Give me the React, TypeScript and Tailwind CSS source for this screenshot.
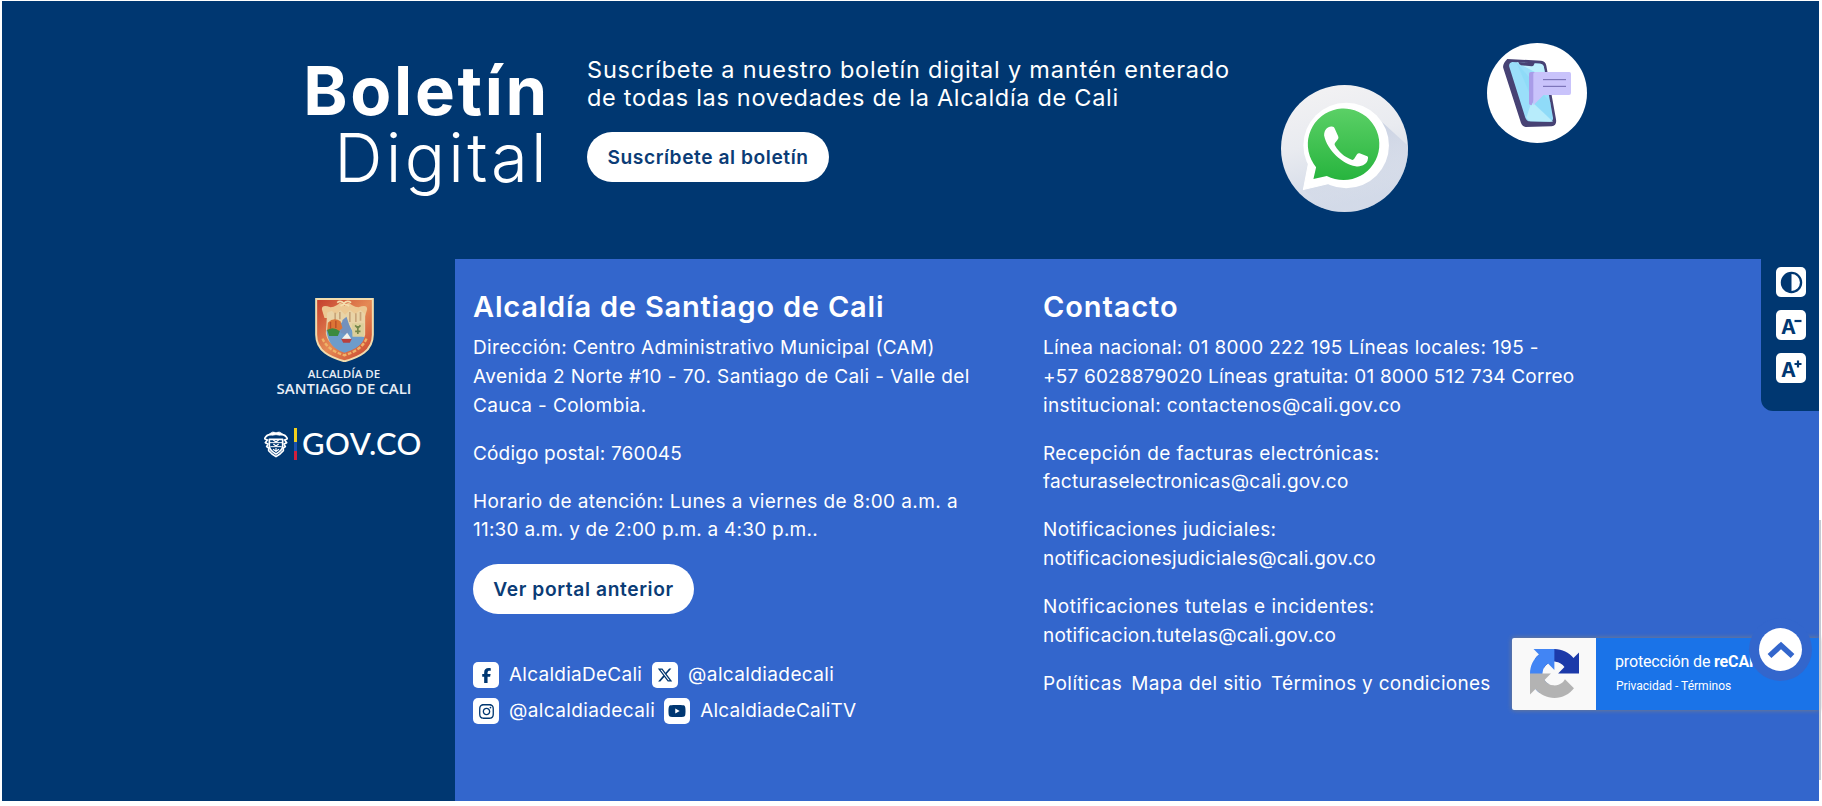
import type { ReactNode } from "react";
import { FaFacebookF, FaInstagram, FaXTwitter, FaYoutube } from "react-icons/fa6";

function CityCrest() {
  return (
    <svg viewBox="0 0 176 192" className="h-16 w-[59px]" aria-hidden="true">
      <defs>
        <linearGradient id="crestRed" x1="0" y1="0" x2="1" y2="1">
          <stop offset="0" stopColor="#c33d2c" />
          <stop offset="0.5" stopColor="#e58a55" />
          <stop offset="1" stopColor="#c8402b" />
        </linearGradient>
      </defs>
      <path d="M3 3H173V110C173 160 130 178 88 190C46 178 3 160 3 110Z" fill="url(#crestRed)" stroke="#f1dcae" strokeWidth="6" />
      <path d="M20 34Q20 18 46 28Q66 24 74 14Q82 14 88 24Q94 14 102 14Q110 24 130 28Q156 18 156 34L148 60H28Z" fill="#ecc892" />
      <path d="M66 14q10-8 20 2q10-10 22-2M76 24q12-10 26 0" fill="none" stroke="#f4dfae" strokeWidth="5" />
      <path d="M36 44L50 38L62 50L76 36L90 50L104 36L120 48L136 36L150 48V110Q146 134 88 162Q36 140 32 106Z" fill="#e9d3a6" />
      <path d="M34 96L66 84L92 64L112 100L148 118Q140 150 88 164Q38 150 34 96Z" fill="#6d9ccb" />
      <path d="M82 66L94 56L106 92L98 112L76 104Z" fill="#7391bd" />
      <path d="M60 44v30M74 42v22M104 42v30M122 46v26M136 42v26" stroke="#c8a57a" strokeWidth="5" />
      <path d="M38 74Q56 56 76 70L82 90L66 104L36 98Z" fill="#dc7435" />
      <path d="M36 96Q54 84 74 100L68 114H42Z" fill="#3b8a40" />
      <path d="M46 72v20M62 68v22" stroke="#b84d28" strokeWidth="4" />
      <path d="M110 76H146V116H112Z" fill="#dccf9a" />
      <path d="M120 82l8 8l8-8M128 84v24M120 100h16" stroke="#74874a" strokeWidth="5" fill="none" />
      <path d="M78 122H110L104 134H84Z" fill="#b9413c" />
      <path d="M80 122L96 104L108 122Z" fill="#f6f2ea" />
      <path d="M22 122Q36 156 88 172Q140 156 154 122" fill="none" stroke="#efb368" strokeWidth="7" strokeDasharray="11 5" />
    </svg>
  );
}

function NationalShield() {
  return (
    <svg viewBox="0 0 72 84" className="h-7 w-6" fill="none" stroke="#fff" strokeWidth="5" strokeLinejoin="round" aria-hidden="true">
      <path d="M16 12Q26 2 36 8Q46 2 56 12L48 16L36 14L24 16Z" fill="#fff" strokeWidth="2" />
      <path d="M22 14Q8 12 2 26L10 30L4 38L12 42L8 50L14 54L14 62L24 72L36 80L48 72L58 62V54L64 50L60 42L68 38L62 30L70 26Q64 12 50 14" />
      <path d="M16 28H56V50Q54 62 36 72Q18 62 16 50Z" />
      <path d="M18 38H54M19 50H53" strokeWidth="3" />
      <path d="M28 30l8 6l8-6M28 42l8 6l8-6M36 54v12M27 58l9 6l9-6" strokeWidth="3.5" />
    </svg>
  );
}

function WhatsAppBadge() {
  return (
    <svg viewBox="0 0 380 380" className="h-[127px] w-[127px]" aria-label="WhatsApp">
      <defs>
        <linearGradient id="waBg" x1="0" y1="0" x2="0.25" y2="1">
          <stop offset="0" stopColor="#f4f3f4" />
          <stop offset="0.5" stopColor="#e9ebf0" />
          <stop offset="1" stopColor="#d0d8e7" />
        </linearGradient>
        <linearGradient id="waGreen" x1="0" y1="0" x2="0" y2="1">
          <stop offset="0" stopColor="#5bd066" />
          <stop offset="1" stopColor="#27b43e" />
        </linearGradient>
        <linearGradient id="waShade" x1="0" y1="0" x2="0.3" y2="1">
          <stop offset="0" stopColor="#bcc6dc" />
          <stop offset="1" stopColor="#d9dfeb" stopOpacity="0.3" />
        </linearGradient>
        <clipPath id="waClip"><circle cx="190" cy="190" r="190" /></clipPath>
      </defs>
      <g clipPath="url(#waClip)">
        <rect width="380" height="380" fill="url(#waBg)" />
        <path d="M285 95L380 182V380H140L67 312Z" fill="url(#waShade)" />
        <circle cx="195" cy="181" r="128" fill="#fff" />
        <path d="M82 236L67 313L146 294Z" fill="#fff" stroke="#fff" strokeWidth="3" strokeLinejoin="round" />
        <path d="M105 246L97 281L137 272A107 107 0 1 0 105 246Z" fill="url(#waGreen)" />
        <path d="M129 151C129 134 139 123 152 124C157 124 159 126 161 131L171 153C173 158 171 161 168 165L162 173C160 176 160 179 162 182C174 202 189 215 210 223C214 225 217 224 219 221L227 208C230 204 233 203 237 205L258 213C261 215 261 218 260 221C259 237 240 246 223 243C185 237 138 195 129 151Z" fill="#fff" />
      </g>
    </svg>
  );
}

function PhoneBadge() {
  return (
    <svg viewBox="0 0 300 300" className="h-[100px] w-[100px]" aria-label="Mensajes">
      <circle cx="150" cy="150" r="150" fill="#fff" />
      <path d="M61 48L162 53Q176 54 178 68L207 229Q210 248 194 250L116 252Q106 251 102 240L49 76Q45 64 61 48Z" fill="#474274" />
      <path d="M76 57L160 62Q170 64 171 74L198 224Q199 235 189 236L129 235Q119 235 115 224L67 72Q64 60 76 57Z" fill="#9adffa" />
      <path d="M88 58L160 62Q170 64 171 74L176 104Z" fill="#bdeffd" />
      <path d="M88 58L190 178L197 235L140 180Z" fill="#83d7f7" opacity="0.45" />
      <path d="M134 176L198 236L129 235L118 224Z" fill="#b7ecfb" />
      <path d="M94 57L143 60L140 67Q139 70 134 70L102 67Q96 66 94 57Z" fill="#474274" />
      <path d="M126 93Q126 87 132 87H146V158L134 187Q126 187 126 181Z" fill="#a99ce8" />
      <path d="M139 92Q139 87 145 87H247Q252 87 252 93V150Q252 156 246 156H170L139 187Z" fill="#c9c3fb" />
      <path d="M168 110H237M168 130H237" stroke="#6e66ad" strokeWidth="3" />
    </svg>
  );
}

function RecaptchaLogo() {
  return (
    <svg viewBox="0 0 64 64" className="size-[49px]" aria-hidden="true">
      <path fill="#1c3aa9" d="M64 31.955l-.033-1.37V4.687l-7.16 7.16C50.948 4.674 42.033.093 32.05.093c-10.4 0-19.622 4.96-25.458 12.64l11.736 11.86a15.55 15.55 0 0 1 4.754-5.334c2.05-1.6 4.952-2.906 8.968-2.906.485 0 .86.057 1.135.163 4.976.393 9.288 3.14 11.828 7.124l-8.307 8.307L64 31.953" />
      <path fill="#4285f4" d="M31.862.094l-1.37.033H4.594l7.16 7.16C4.58 13.147 0 22.06 0 32.046c0 10.4 4.96 19.622 12.64 25.458L24.5 45.768a15.55 15.55 0 0 1-5.334-4.754c-1.6-2.05-2.906-4.952-2.906-8.968 0-.485.057-.86.163-1.135.393-4.976 3.14-9.288 7.124-11.828l8.307 8.307L31.86.095" />
      <path fill="#b3b3b3" d="M.001 32.045l.033 1.37v25.898l7.16-7.16c5.86 7.173 14.774 11.754 24.76 11.754 10.4 0 19.622-4.96 25.458-12.64l-11.736-11.86a15.55 15.55 0 0 1-4.754 5.334c-2.05 1.6-4.952 2.906-8.968 2.906-.485 0-.86-.057-1.135-.163-4.976-.393-9.288-3.14-11.828-7.124l8.307-8.307c-10.522.04-22.4.066-27.295-.005" />
    </svg>
  );
}

function Social({ icon, children }: { icon: ReactNode; children: ReactNode }) {
  return (
    <a className="flex items-center gap-2.5">
      <span className="flex size-[26px] items-center justify-center rounded-[5px] bg-white text-[#003771]">{icon}</span>
      {children}
    </a>
  );
}

function PillButton({ className, children }: { className: string; children: ReactNode }) {
  return (
    <button className={`flex h-[50px] items-center justify-center whitespace-nowrap rounded-[25px] bg-white text-[19.2px] font-semibold text-[#0b3c76] ${className}`}>
      {children}
    </button>
  );
}

function Newsletter() {
  return (
    <section className="flex h-[258px] items-start pt-14">
      <h2 className="w-[548px] text-right text-[67px] leading-[67px]">
        <span className="block font-bold tracking-[2.7px]">Boletín</span>
        <span className="block font-light tracking-[3.3px]">Digital</span>
      </h2>
      <div className="-mt-px ml-[37px] w-[694px]">
        <p className="whitespace-nowrap text-[23.5px] leading-7">
          <span className="block tracking-[0.8px]">Suscríbete a nuestro boletín digital y mantén enterado</span>
          <span className="block tracking-[0.7px]">de todas las novedades de la Alcaldía de Cali</span>
        </p>
        <PillButton className="mt-5 w-[242px] tracking-[0.56px]">Suscríbete al boletín</PillButton>
      </div>
      <div className="mt-7 w-[206px]"><WhatsAppBadge /></div>
      <div className="-mt-3.5"><PhoneBadge /></div>
    </section>
  );
}

function Logos() {
  return (
    <aside className="flex w-[453px] flex-col items-center pl-[231px] pt-[39px]">
      <div className="flex w-full flex-col items-center font-['Open_Sans'] font-semibold text-[#e8eef6]">
        <CityCrest />
        <span className="mt-[5px] text-[11.5px] leading-[14px]">ALCALDÍA DE</span>
        <span className="-mt-[2px] text-[15px] leading-[18px]">SANTIAGO DE CALI</span>
      </div>
      <div className="mt-[31px] flex h-8 w-full items-center pl-[31px]">
        <NationalShield />
        <span className="ml-[6px] flex h-8 w-[3px] flex-col">
          <span className="h-[14px] bg-[#f2cf1d]" />
          <span className="h-[9px] bg-[#1c52b0]" />
          <span className="h-[9px] bg-[#d01f3c]" />
        </span>
        <span className="-mt-0.5 ml-[5px] font-['Lato'] text-[31px] font-medium leading-8 tracking-[0.4px]">GOV.CO</span>
      </div>
    </aside>
  );
}

function CityInfo() {
  return (
    <div className="w-[570px]">
      <h3 className="text-[29px] font-semibold leading-[35px] tracking-[0.8px]">Alcaldía de Santiago de Cali</h3>
      <div className="mt-[10px] flex flex-col gap-[19.2px]">
        <p>
          <span className="block tracking-[0.34px]">Dirección: Centro Administrativo Municipal (CAM)</span>
          <span className="block tracking-[0.42px]">Avenida 2 Norte #10 - 70. Santiago de Cali - Valle del</span>
          <span className="block tracking-[0.37px]">Cauca - Colombia.</span>
        </p>
        <p className="tracking-[0.17px]">Código postal: 760045</p>
        <p>
          <span className="block tracking-[0.41px]">Horario de atención: Lunes a viernes de 8:00 a.m. a</span>
          <span className="block tracking-[0.23px]">11:30 a.m. y de 2:00 p.m. a 4:30 p.m..</span>
        </p>
      </div>
      <PillButton className="mt-[19px] w-[221px] tracking-[0.62px]">Ver portal anterior</PillButton>
      <div className="mt-12 flex flex-col gap-2.5 leading-[26px]">
        <div className="flex gap-[10px]">
          <Social icon={<FaFacebookF size={15} />}><span className="tracking-[0.26px]">AlcaldiaDeCali</span></Social>
          <Social icon={<FaXTwitter size={16} />}><span className="tracking-[0.38px]">@alcaldiadecali</span></Social>
        </div>
        <div className="flex gap-[9px]">
          <Social icon={<FaInstagram size={17} />}><span className="tracking-[0.38px]">@alcaldiadecali</span></Social>
          <Social icon={<FaYoutube size={18} />}><span className="tracking-[0.21px]">AlcaldiadeCaliTV</span></Social>
        </div>
      </div>
    </div>
  );
}

function Contact() {
  return (
    <div>
      <h3 className="text-[29px] font-semibold leading-[35px] tracking-[0.9px]">Contacto</h3>
      <div className="mt-[10px] flex flex-col gap-[19.2px]">
        <p>
          <span className="block tracking-[0.34px]">Línea nacional: 01 8000 222 195 Líneas locales: 195 -</span>
          <span className="block tracking-[0.18px]">+57 6028879020 Líneas gratuita: 01 8000 512 734 Correo</span>
          <span className="block tracking-[0.37px]">institucional: contactenos@cali.gov.co</span>
        </p>
        <p>
          <span className="block tracking-[0.42px]">Recepción de facturas electrónicas:</span>
          <span className="block tracking-[0.23px]">facturaselectronicas@cali.gov.co</span>
        </p>
        <p>
          <span className="block tracking-[0.37px]">Notificaciones judiciales:</span>
          <span className="block tracking-[0.22px]">notificacionesjudiciales@cali.gov.co</span>
        </p>
        <p>
          <span className="block tracking-[0.5px]">Notificaciones tutelas e incidentes:</span>
          <span className="block tracking-[0.25px]">notificacion.tutelas@cali.gov.co</span>
        </p>
        <nav className="flex gap-[9px]">
          <a className="tracking-[0.45px]">Políticas</a>
          <a className="tracking-[0.4px]">Mapa del sitio</a>
          <a className="tracking-[0.28px]">Términos y condiciones</a>
        </nav>
      </div>
    </div>
  );
}

function AccessibilityBar() {
  return (
    <div className="absolute right-[3px] top-[259px] flex h-[152px] w-[58px] flex-col gap-[13px] rounded-bl-xl bg-[#003771] pl-[15px] pt-2">
      <button className="flex size-[30px] items-center justify-center rounded-[5px] bg-white">
        <svg viewBox="0 0 24 24" className="size-[23px]" aria-label="Contraste">
          <circle cx="12" cy="12" r="10" fill="none" stroke="#003771" strokeWidth="2.4" />
          <path d="M12 2A10 10 0 0 0 12 22Z" fill="#003771" />
        </svg>
      </button>
      {["−", "+"].map((sign) => (
        <button key={sign} className="relative flex size-[30px] items-end rounded-[5px] bg-white pl-[5px] text-[#003771]">
          <span className="text-[20px] font-bold leading-[25px]">A</span>
          <svg viewBox="0 0 8 8" className="absolute right-[4px] top-[7px] size-[8px]" aria-label={sign}>
            <path d={sign === "+" ? "M0.5 4H7.5M4 0.5V7.5" : "M0.5 4H7.5"} stroke="#003771" strokeWidth="2.2" />
          </svg>
        </button>
      ))}
    </div>
  );
}

function RecaptchaBadge() {
  return (
    <div className="absolute right-[3px] top-[638px] flex h-[72px] w-[307px] overflow-hidden rounded-l-[2px] bg-[#1a73e8] font-['Roboto'] shadow-[0_0_5px_gray]">
      <div className="flex w-[84px] items-center justify-center bg-[#f9f9f9] pb-px"><RecaptchaLogo /></div>
      <div className="whitespace-nowrap pl-[19px] pt-[14px]">
        <p className="text-base leading-5 tracking-[-0.15px]">protección de <b>reCAPTCHA</b></p>
        <p className="mt-[7px] pl-px text-xs leading-[14px]">Privacidad - Términos</p>
      </div>
    </div>
  );
}

function ScrollTop() {
  return (
    <button className="absolute right-[10px] top-[618px] flex size-[63px] items-center justify-center rounded-full bg-[#3366cc]">
      <span className="flex size-[43px] items-center justify-center rounded-full bg-white">
        <svg viewBox="0 0 28 18" className="h-[18px] w-7" aria-label="Subir">
          <path d="M2.5 15L14 4.5L25.5 15" fill="none" stroke="#3366cc" strokeWidth="5.6" />
        </svg>
      </span>
    </button>
  );
}

export default function App() {
  return (
    <div className="relative h-[806px] w-full overflow-hidden bg-white pl-[2px] pr-[3px] pt-px font-['Inter',sans-serif] text-white">
      <footer className="h-[800px] overflow-hidden bg-[#003771]">
        <Newsletter />
        <div className="flex h-[542px]">
          <Logos />
          <div className="flex flex-1 whitespace-nowrap bg-[#3366cc] pl-[18px] pt-[30px] text-[19px] leading-[28.8px]">
            <CityInfo />
            <Contact />
          </div>
        </div>
      </footer>
      <AccessibilityBar />
      <RecaptchaBadge />
      <ScrollTop />
      <div className="absolute right-px top-[520px] h-[260px] w-[2px] bg-[#c3c9d2]" />
    </div>
  );
}
